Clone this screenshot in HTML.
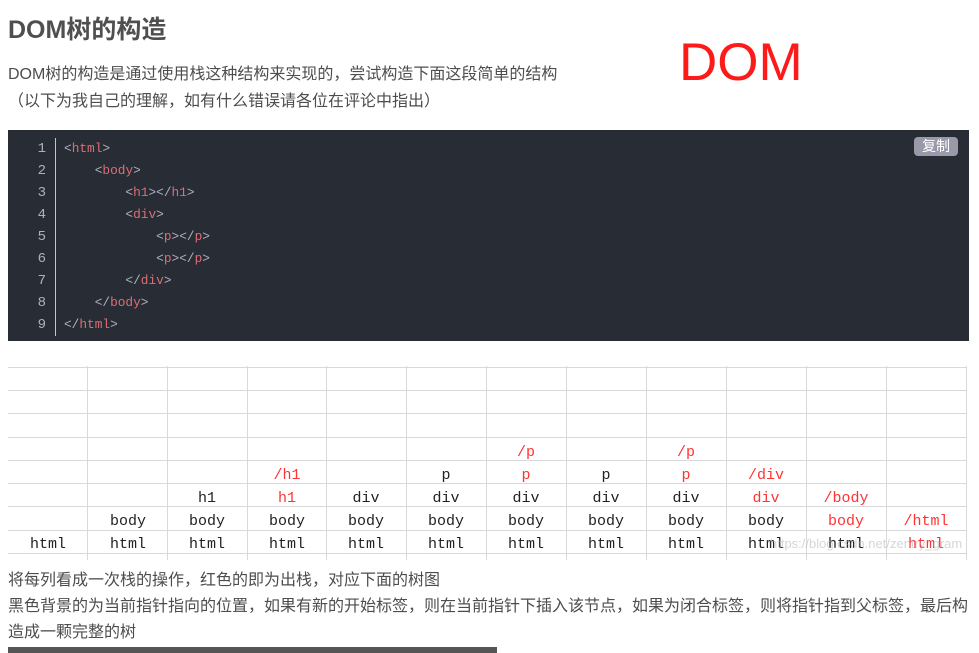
<!DOCTYPE html>
<html><head><meta charset="utf-8">
<style>
*{margin:0;padding:0;box-sizing:border-box}
body{width:979px;height:653px;background:#fff;position:relative;overflow:hidden;font-family:"Liberation Sans","Noto Sans CJK SC",sans-serif;color:#4d4d4d}
.a{position:absolute;white-space:nowrap}
h1{position:absolute;left:8px;top:15px;font-size:25px;font-weight:bold;color:#4f4f4f;line-height:30px}
.p{font-size:16px;color:#4d4d4d;line-height:20px}
.q{font-size:16px;color:#4d4d4d;line-height:20px}
.code{position:absolute;left:8px;top:130px;width:961px;height:211px;background:#282c34}
.ln{position:absolute;left:0;width:38px;text-align:right;color:#abb2bf;font-family:"Liberation Mono",monospace;font-size:14px;line-height:22px;top:8px}
.gut{position:absolute;left:47px;top:8px;width:1px;height:198px;background:#c5c5c5}
.src{position:absolute;left:56px;top:8px;font-family:"Liberation Mono",monospace;font-size:12.8px;line-height:22px;color:#abb2bf;white-space:pre}
.t{color:#e06c75}
.btn{position:absolute;left:906px;top:7px;width:44px;height:19px;background:#9999aa;border-radius:4px;color:#fff;font-size:14px;line-height:19px;text-align:center}
.c{position:absolute;width:80px;text-align:center;font-family:"Liberation Mono",monospace;font-size:15px;line-height:23px;color:#222}
.r{color:#ff3333}
</style></head><body>
<h1>DOM树的构造</h1>
<div class="a p" style="left:8px;top:65px">DOM树的构造是通过使用栈这种结构来实现的，尝试构造下面这段简单的结构</div>
<div class="a p" style="left:8px;top:92px">（以下为我自己的理解，如有什么错误请各位在评论中指出）</div>
<div class="a" style="left:679px;top:30px;font-size:53px;color:#ff1a1a;line-height:66px">DOM</div>

<div class="code">
<div class="ln">1<br>2<br>3<br>4<br>5<br>6<br>7<br>8<br>9</div>
<div class="gut"></div>
<div class="src">&lt;<span class="t">html</span>&gt;
    &lt;<span class="t">body</span>&gt;
        &lt;<span class="t">h1</span>&gt;&lt;/<span class="t">h1</span>&gt;
        &lt;<span class="t">div</span>&gt;
            &lt;<span class="t">p</span>&gt;&lt;/<span class="t">p</span>&gt;
            &lt;<span class="t">p</span>&gt;&lt;/<span class="t">p</span>&gt;
        &lt;/<span class="t">div</span>&gt;
    &lt;/<span class="t">body</span>&gt;
&lt;/<span class="t">html</span>&gt;</div>
<div class="btn">复制</div>
</div>

<svg class="a" style="left:0;top:360px" width="979" height="200">
<g stroke="#d9d9d9" stroke-width="1">
<line x1="8" x2="966" y1="7.5" y2="7.5"/><line x1="8" x2="966" y1="30.5" y2="30.5"/><line x1="8" x2="966" y1="53.5" y2="53.5"/><line x1="8" x2="966" y1="77.5" y2="77.5"/><line x1="8" x2="966" y1="100.5" y2="100.5"/><line x1="8" x2="966" y1="123.5" y2="123.5"/><line x1="8" x2="966" y1="146.5" y2="146.5"/><line x1="8" x2="966" y1="170.5" y2="170.5"/><line x1="8" x2="966" y1="193.5" y2="193.5"/>
<line x1="87.5" x2="87.5" y1="6" y2="200"/><line x1="167.5" x2="167.5" y1="6" y2="200"/><line x1="247.5" x2="247.5" y1="6" y2="200"/><line x1="326.5" x2="326.5" y1="6" y2="200"/><line x1="406.5" x2="406.5" y1="6" y2="200"/><line x1="486.5" x2="486.5" y1="6" y2="200"/><line x1="566.5" x2="566.5" y1="6" y2="200"/><line x1="646.5" x2="646.5" y1="6" y2="200"/><line x1="726.5" x2="726.5" y1="6" y2="200"/><line x1="806.5" x2="806.5" y1="6" y2="200"/><line x1="886.5" x2="886.5" y1="6" y2="200"/><line x1="966.5" x2="966.5" y1="6" y2="200"/>
</g></svg>

<div style="position:absolute;left:0;top:2px;width:979px;height:600px">
<div class="c" style="left:8px;top:531px">html</div>

<div class="c" style="left:88px;top:531px">html</div>
<div class="c" style="left:88px;top:508px">body</div>

<div class="c" style="left:167px;top:531px">html</div>
<div class="c" style="left:167px;top:508px">body</div>
<div class="c" style="left:167px;top:485px">h1</div>

<div class="c" style="left:247px;top:531px">html</div>
<div class="c" style="left:247px;top:508px">body</div>
<div class="c r" style="left:247px;top:485px">h1</div>
<div class="c r" style="left:247px;top:462px">/h1</div>

<div class="c" style="left:326px;top:531px">html</div>
<div class="c" style="left:326px;top:508px">body</div>
<div class="c" style="left:326px;top:485px">div</div>

<div class="c" style="left:406px;top:531px">html</div>
<div class="c" style="left:406px;top:508px">body</div>
<div class="c" style="left:406px;top:485px">div</div>
<div class="c" style="left:406px;top:462px">p</div>

<div class="c" style="left:486px;top:531px">html</div>
<div class="c" style="left:486px;top:508px">body</div>
<div class="c" style="left:486px;top:485px">div</div>
<div class="c r" style="left:486px;top:462px">p</div>
<div class="c r" style="left:486px;top:439px">/p</div>

<div class="c" style="left:566px;top:531px">html</div>
<div class="c" style="left:566px;top:508px">body</div>
<div class="c" style="left:566px;top:485px">div</div>
<div class="c" style="left:566px;top:462px">p</div>

<div class="c" style="left:646px;top:531px">html</div>
<div class="c" style="left:646px;top:508px">body</div>
<div class="c" style="left:646px;top:485px">div</div>
<div class="c r" style="left:646px;top:462px">p</div>
<div class="c r" style="left:646px;top:439px">/p</div>

<div class="c" style="left:726px;top:531px">html</div>
<div class="c" style="left:726px;top:508px">body</div>
<div class="c r" style="left:726px;top:485px">div</div>
<div class="c r" style="left:726px;top:462px">/div</div>

<div class="c" style="left:806px;top:531px">html</div>
<div class="c r" style="left:806px;top:508px">body</div>
<div class="c r" style="left:806px;top:485px">/body</div>

<div class="c r" style="left:886px;top:531px">html</div>
<div class="c r" style="left:886px;top:508px">/html</div>
</div>

<div class="a" style="left:770px;top:536px;font-size:13px;color:rgba(180,180,180,0.55)">https://blog.csdn.net/zentry_gram</div>

<div class="a q" style="left:8px;top:571px">将每列看成一次栈的操作，红色的即为出栈，对应下面的树图</div>
<div class="a q" style="left:8px;top:597px">黑色背景的为当前指针指向的位置，如果有新的开始标签，则在当前指针下插入该节点，如果为闭合标签，则将指针指到父标签，最后构</div>
<div class="a q" style="left:8px;top:623px">造成一颗完整的树</div>
<div class="a" style="left:8px;top:647px;width:489px;height:6px;background:#555"></div>
</body></html>
